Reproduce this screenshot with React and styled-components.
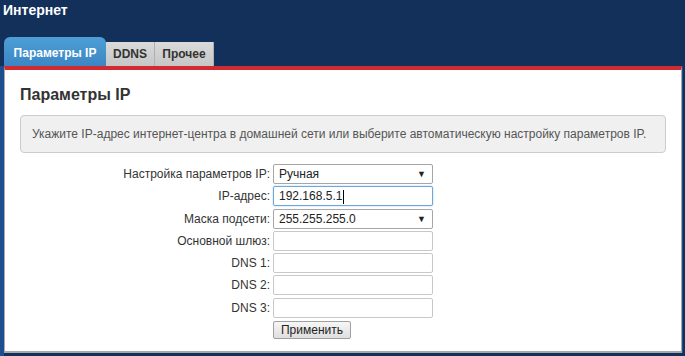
import React from "react";
import styled, { createGlobalStyle } from "styled-components";

const GlobalStyle = createGlobalStyle`
  html, body {
    margin: 0;
    padding: 0;
    background: #12305a;
  }
  body {
    font-family: "Liberation Sans", Arial, sans-serif;
  }
`;

const Page = styled.div`
  width: 685px;
  height: 356px;
  overflow: hidden;
  background: #12305a;
  display: flex;
  flex-direction: column;
`;

const PageTitle = styled.h1`
  margin: 0;
  padding: 2px 0 0 3px;
  height: 32px;
  box-sizing: border-box;
  font-size: 14px;
  font-weight: bold;
  color: #ffffff;
  line-height: 17px;
`;

const TabBar = styled.div`
  display: flex;
  align-items: flex-end;
  height: 31px;
  padding-left: 4px;
  margin-top: 3px;
`;

const Tab = styled.div`
  box-sizing: border-box;
  width: ${(p) => p.width}px;
  height: ${(p) => (p.active ? 29 : 24)}px;
  display: flex;
  align-items: center;
  justify-content: center;
  font-size: 12px;
  font-weight: bold;
  color: ${(p) => (p.active ? "#ffffff" : "#333333")};
  background: ${(p) =>
    p.active
      ? "linear-gradient(#4d9fd6, #3b86c4)"
      : "linear-gradient(#dadada, #c6c6c6)"};
  border-radius: ${(p) => (p.active ? "6px 6px 0 0" : "0")};
  border-right: ${(p) => (p.active ? "none" : "1px solid #b0b0b0")};
  padding-top: ${(p) => (p.active ? "2px" : "0")};
`;

const Frame = styled.div`
  flex: 1;
  display: flex;
  padding: 0 3px 3px 4px;
  background: linear-gradient(90deg, #1d4f90 0 4px, #12305a 4px);
`;

const Panel = styled.section`
  flex: 1;
  background: #ffffff;
  border-top: 4px solid #cf2b30;
  border-left: 1px solid #a8a8a8;
  border-right: 1px solid #a8a8a8;
  border-bottom: 2px solid #a8a8a8;
  padding: 0 15px;
  box-shadow: 1px 0 0 #1d4f90;
`;

const Heading = styled.h2`
  margin: 15px 0 0 0;
  font-size: 16px;
  font-weight: bold;
  color: #333333;
  line-height: 20px;
`;

const Note = styled.div`
  margin-top: 10px;
  height: 38px;
  box-sizing: border-box;
  border: 1px solid #cccccc;
  border-radius: 4px;
  background: #f0f0f0;
  display: flex;
  align-items: center;
  padding-left: 11px;
  font-size: 12px;
  color: #555555;
`;

const Form = styled.form`
  margin: 11px 0 0 -15px;
  display: grid;
  grid-template-columns: 265px 160px;
  column-gap: 3px;
  row-gap: 2.3px;
  grid-auto-rows: 20px;
  font-size: 12px;
  color: #333333;
`;

const Label = styled.label`
  text-align: right;
  line-height: 20px;
  white-space: nowrap;
`;

const Field = styled.div`
  box-sizing: border-box;
  height: 20px;
  border: 1px solid ${(p) => (p.focused ? "#6aa8de" : p.select ? "#a6a6a6" : "#c8c8c8")};
  border-radius: 2px;
  background: #ffffff;
  display: flex;
  align-items: center;
  padding: 0 6px 0 5px;
  color: #222222;
  font-size: 12px;
  box-shadow: ${(p) => (p.focused ? "0 0 2px rgba(90,150,220,0.5)" : "none")};
`;

const Value = styled.span`
  flex: 1;
`;

const Caret = styled.span`
  display: inline-block;
  width: 1px;
  height: 14px;
  background: #000;
  margin-left: 1px;
  vertical-align: middle;
`;

const Arrow = styled.span`
  font-size: 9px;
  color: #222;
`;

const Button = styled.button`
  box-sizing: border-box;
  width: 78px;
  height: 18px;
  margin-top: 1px;
  padding: 0;
  font-family: "Liberation Sans", Arial, sans-serif;
  font-size: 12px;
  color: #222;
  border: 1px solid #a0a0a0;
  border-radius: 2px;
  background: linear-gradient(#f6f6f6, #dedede);
`;

const rows = [
  { label: "Настройка параметров IP:", value: "Ручная", select: true },
  { label: "IP-адрес:", value: "192.168.5.1", focused: true },
  { label: "Маска подсети:", value: "255.255.255.0", select: true },
  { label: "Основной шлюз:", value: "" },
  { label: "DNS 1:", value: "" },
  { label: "DNS 2:", value: "" },
  { label: "DNS 3:", value: "" },
];

export default function App() {
  return (
    <Page>
      <GlobalStyle />
      <PageTitle>Интернет</PageTitle>
      <TabBar>
        <Tab active width={102}>Параметры IP</Tab>
        <Tab width={49}>DDNS</Tab>
        <Tab width={59}>Прочее</Tab>
      </TabBar>
      <Frame>
        <Panel>
          <Heading>Параметры IP</Heading>
          <Note>
            Укажите IP-адрес интернет-центра в домашней сети или выберите
            автоматическую настройку параметров IP.
          </Note>
          <Form onSubmit={(e) => e.preventDefault()}>
            {rows.map((r) => (
              <React.Fragment key={r.label}>
                <Label>{r.label}</Label>
                <Field select={r.select} focused={r.focused}>
                  <Value>
                    {r.value}
                    {r.focused && <Caret />}
                  </Value>
                  {r.select && <Arrow>▼</Arrow>}
                </Field>
              </React.Fragment>
            ))}
            <span />
            <div>
              <Button type="submit">Применить</Button>
            </div>
          </Form>
        </Panel>
      </Frame>
    </Page>
  );
}
